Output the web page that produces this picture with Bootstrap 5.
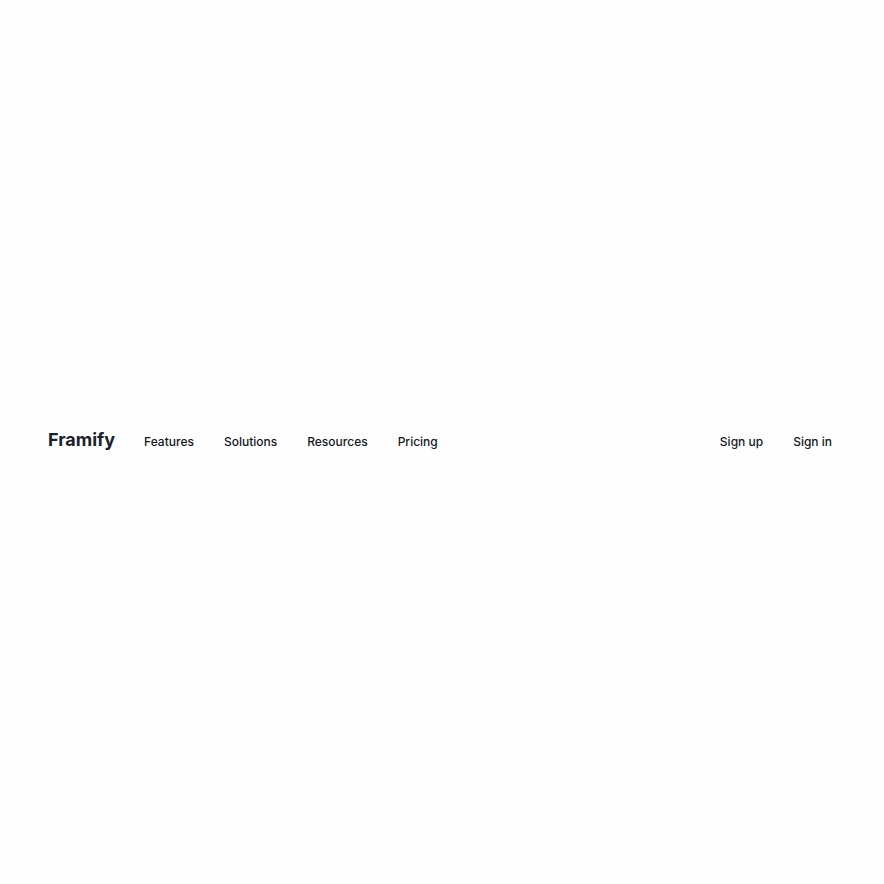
<!DOCTYPE html>
<html lang="en">
<head>
<meta charset="utf-8">
<meta name="viewport" content="width=device-width, initial-scale=1">
<title>Framify</title>
<link href="https://cdn.jsdelivr.net/npm/bootstrap@5.3.0/dist/css/bootstrap.min.css" rel="stylesheet">
<style>
body { font-family: Inter, "Liberation Sans", sans-serif; background: #fefefe; }
.site-bar { padding: 0 52px 2px 48px; }
.site-brand { font-size: 18px; line-height: 24px; font-weight: 700; color: #1b222c; }
.site-links { gap: 30px; }
.site-links .nav-link { font-size: 12px; line-height: 24px; font-weight: 500; color: #14171c; }
.site-main { margin-left: 29px; }
</style>
</head>
<body class="min-vh-100 d-flex flex-column justify-content-center">
<nav class="navbar navbar-expand site-bar align-items-baseline" aria-label="Main">
  <a class="navbar-brand site-brand p-0 m-0" href="#">Framify</a>
  <ul class="navbar-nav site-links site-main me-auto">
    <li class="nav-item"><a class="nav-link p-0" href="#">Features</a></li>
    <li class="nav-item"><a class="nav-link p-0" href="#">Solutions</a></li>
    <li class="nav-item"><a class="nav-link p-0" href="#">Resources</a></li>
    <li class="nav-item"><a class="nav-link p-0" href="#">Pricing</a></li>
  </ul>
  <ul class="navbar-nav site-links">
    <li class="nav-item"><a class="nav-link p-0" href="#">Sign up</a></li>
    <li class="nav-item"><a class="nav-link p-0" href="#">Sign in</a></li>
  </ul>
</nav>
<script src="https://cdn.jsdelivr.net/npm/bootstrap@5.3.0/dist/js/bootstrap.bundle.min.js"></script>
</body>
</html>
